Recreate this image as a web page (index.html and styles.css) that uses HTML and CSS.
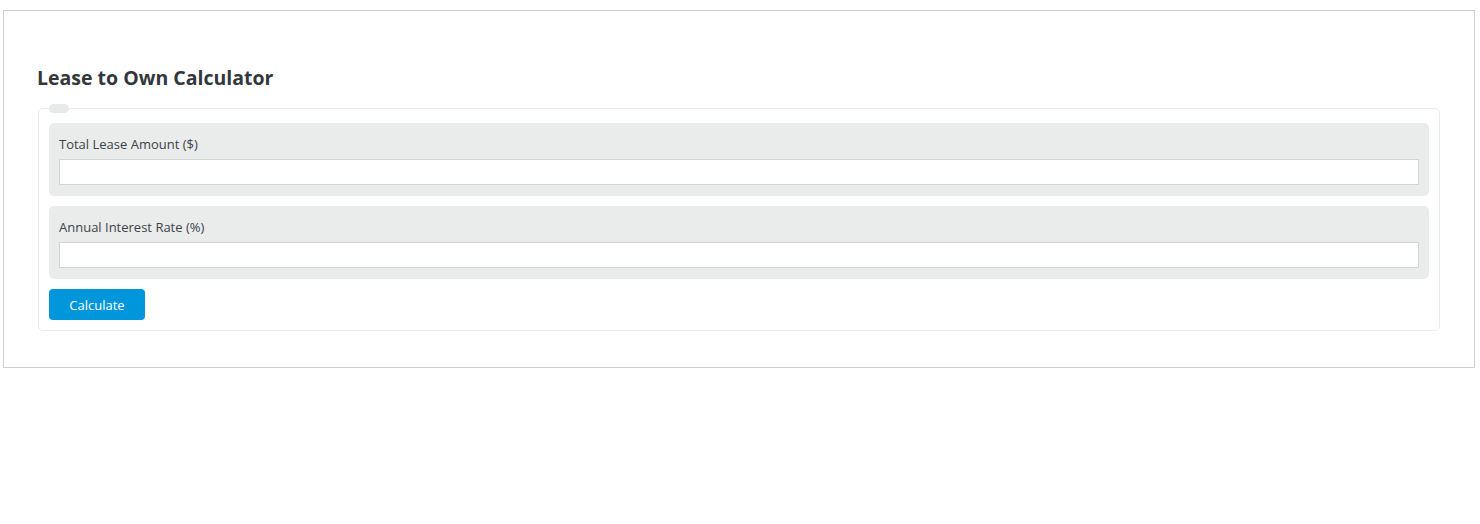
FILE: index.html
```html
<!DOCTYPE html>
<html lang="en">
<head>
    <meta charset="UTF-8">
    <meta name="viewport" content="width=device-width, initial-scale=1.0">
    <title>Lease to Own Calculator</title>
    <link rel="stylesheet" href="styles.css">
</head>
<body>
    <div class="page">
        <div class="calc-box">
            <h2 class="calc-title">Lease to Own Calculator</h2>
            <form class="calc-form" id="calc-form">
                <fieldset>
                    <legend></legend>
                    <div class="field-group">
                        <label for="lease-amount">Total Lease Amount ($)</label>
                        <input type="text" id="lease-amount">
                    </div>
                    <div class="field-group">
                        <label for="interest-rate">Annual Interest Rate (%)</label>
                        <input type="text" id="interest-rate">
                    </div>
                    <button type="submit" class="calc-button">Calculate</button>
                </fieldset>
            </form>
        </div>
    </div>
</body>
</html>
```

FILE: styles.css
```css
body {
    margin: 0;
    padding: 0;
    font-family: 'Open Sans', 'DejaVu Sans', sans-serif;
    color: #333;
    background-color: #fff;
}

.page {
    padding: 10px 5px 0 3px;
}

.calc-box {
    border: 1px solid #d0d0d0;
    padding: 36px 33px 36px 33px;
}

.calc-title {
    margin: 17px 0 12px 0;
    font-size: 19.5px;
    font-weight: 700;
    line-height: 28px;
    color: #32373c;
}

fieldset {
    margin: 0 1px 0 1px;
    padding: 10px 10px 10px 10px;
    border: 1px solid #ebebeb;
    border-radius: 5px;
    display: flex;
    flex-direction: column;
    align-items: flex-start;
    gap: 10px;
}

legend {
    width: 20px;
    height: 9px;
    padding: 0;
    background-color: #e8e9e9;
    border-radius: 5px;
}

.field-group {
    align-self: stretch;
    background-color: #eaebeb;
    border-radius: 5px;
    padding: 11px 10px 11px 10px;
}

label {
    display: block;
    font-size: 13px;
    line-height: 20px;
    margin-bottom: 5px;
    color: #3c434a;
}

input {
    display: block;
    box-sizing: border-box;
    width: 100%;
    height: 26px;
    margin: 0;
    padding: 4px 6px;
    border: 1px solid #d4d4d4;
    background-color: #fff;
    font-family: inherit;
    font-size: 13px;
}

.calc-button {
    width: 96px;
    height: 31px;
    padding: 0;
    background-color: #0096db;
    color: #fff;
    border: none;
    border-radius: 4px;
    font-family: inherit;
    font-size: 13px;
    cursor: pointer;
}

.calc-button:hover {
    background-color: #0085c3;
}
```
